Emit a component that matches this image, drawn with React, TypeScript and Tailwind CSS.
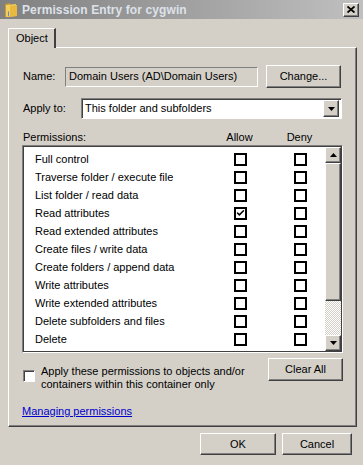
import { Check } from 'lucide-react';

const rows = [
  'Full control',
  'Traverse folder / execute file',
  'List folder / read data',
  'Read attributes',
  'Read extended attributes',
  'Create files / write data',
  'Create folders / append data',
  'Write attributes',
  'Write extended attributes',
  'Delete subfolders and files',
  'Delete',
  'Read permissions',
];

// classic raised 3D button
const raised =
  'bg-[#d4d0c8] border border-t-white border-l-white border-r-[#404040] border-b-[#404040] shadow-[inset_-1px_-1px_0_#808080]';

function Box({ checked }: { checked?: boolean }) {
  return (
    <div className="w-[13px] h-[13px] border-2 border-black bg-white flex items-center justify-center">
      {checked && <Check className="w-[10px] h-[10px] text-black" strokeWidth={4} />}
    </div>
  );
}

function Arrow({ up }: { up?: boolean }) {
  return (
    <svg width="7" height="4" viewBox="0 0 7 4">
      {up ? <path d="M3.5 0 L7 4 L0 4 Z" fill="#000" /> : <path d="M0 0 L7 0 L3.5 4 Z" fill="#000" />}
    </svg>
  );
}

export default function App() {
  return (
    <div className="w-[363px] h-[465px] bg-[#d4d0c8] overflow-hidden flex flex-col text-[11px] text-black font-['Tahoma','Liberation_Sans',sans-serif]">
      {/* Title bar */}
      <div className="h-[19px] flex items-center bg-linear-to-r from-[#808080] to-[#c0c0c0] px-[4px]">
        <svg width="14" height="16" viewBox="0 0 14 16">
          <path d="M1 2 L6 1 L6 15 L1 15 Z" fill="#c89a2a" />
          <path d="M2 3 L12 2 L12 14 L2 15 Z" fill="#f3cd5e" />
          <path d="M6 4 L13 3 L13 14 L6 15 Z" fill="#e8b93c" />
          <path d="M4 10 L5 9 L5 14 L4 14 Z" fill="#5a8ad0" />
        </svg>
        <span className="ml-[4px] font-bold text-[12px] text-[#dde2ea] tracking-[0.1px]">Permission Entry for cygwin</span>
        <div className={`ml-auto w-[16px] h-[14px] flex items-center justify-center ${raised}`}>
          <svg width="8" height="7" viewBox="0 0 8 7">
            <path d="M0.5 0.5 L7.5 6.5 M7.5 0.5 L0.5 6.5" stroke="#000" strokeWidth="1.8" />
          </svg>
        </div>
      </div>

      {/* Tab */}
      <div className="mt-[9px] ml-[8px] flex">
        <div className="w-[48px] h-[20px] border-t border-l border-t-white border-l-white border-r-2 border-r-[#404040] flex items-center pl-[7px] -mb-px bg-[#d4d0c8] relative z-10">
          Object
        </div>
      </div>

      {/* Panel */}
      <div className="ml-[8px] w-[349px] h-[380px] border border-t-white border-l-white border-r-[#404040] border-b-[#404040] shadow-[inset_-1px_-1px_0_#808080] flex flex-col pl-[14px] pr-[13px]">
        {/* Name */}
        <div className="mt-[17px] h-[23px] flex items-center">
          <span className="w-[42px]">Name:</span>
          <div className="w-[193px] h-[20px] border border-t-[#808080] border-l-[#808080] border-r-white border-b-white flex items-center pl-[3px]">
            Domain Users (AD\Domain Users)
          </div>
          <div className={`ml-[8px] w-[75px] h-[23px] flex items-center justify-center ${raised}`}>Change...</div>
        </div>

        {/* Apply to */}
        <div className="mt-[10px] h-[21px] flex items-center">
          <span className="w-[58px]">Apply to:</span>
          <div className="w-[261px] h-[21px] border border-t-[#808080] border-l-[#808080] border-r-white border-b-white shadow-[inset_1px_1px_0_#404040] bg-white flex items-center pl-[3px] pr-[2px]">
            <span className="flex-1">This folder and subfolders</span>
            <div className={`w-[16px] h-[17px] flex items-center justify-center ${raised}`}>
              <Arrow />
            </div>
          </div>
        </div>

        {/* Header */}
        <div className="mt-[11px] h-[15px] flex items-center -mr-[1px]">
          <span className="w-[198px]">Permissions:</span>
          <span className="w-[37px] text-center">Allow</span>
          <span className="ml-[23px] w-[37px] text-center">Deny</span>
        </div>

        {/* Listbox */}
        <div className="-ml-[1px] w-[321px] h-[208px] border border-t-[#808080] border-l-[#808080] border-r-white border-b-white shadow-[inset_1px_1px_0_#404040,inset_-1px_-1px_0_#404040] bg-white flex overflow-hidden p-[1px]">
          <div className="flex-1 flex flex-col pt-[3px] overflow-hidden">
            {rows.map((r, i) => (
              <div key={r} className="h-[18px] shrink-0 flex items-center">
                <span className="w-[210px] pl-[11px]">{r}</span>
                <Box checked={i === 3} />
                <div className="ml-[47px]">
                  <Box />
                </div>
              </div>
            ))}
          </div>
          {/* Scrollbar */}
          <div className="w-[16px] flex flex-col">
            <div className={`h-[16px] flex items-center justify-center ${raised}`}>
              <Arrow up />
            </div>
            <div className={`h-[138px] ${raised}`} />
            <div className="flex-1 bg-[repeating-conic-gradient(#d4d0c8_0_25%,#ffffff_0_50%)] bg-size-[2px_2px]" />
            <div className={`h-[16px] flex items-center justify-center ${raised}`}>
              <Arrow />
            </div>
          </div>
        </div>

        {/* Apply checkbox + Clear All */}
        <div className="mt-[5px] flex items-start">
          <div className="mt-[12px] w-[12px] h-[12px] border border-t-[#808080] border-l-[#808080] border-r-white border-b-white shadow-[inset_1px_1px_0_#404040] bg-white" />
          <div className="ml-[6px] mt-[7px] w-[215px] leading-[13px]">
            Apply these permissions to objects and/or
            <br />
            containers within this container only
          </div>
          <div className={`ml-auto w-[75px] h-[23px] flex items-center justify-center ${raised}`}>Clear All</div>
        </div>

        <div className="mt-auto mb-[7px] -ml-[1px]">
          <span className="text-[#0000cc] underline">Managing permissions</span>
        </div>
      </div>

      {/* Bottom buttons */}
      <div className="mt-[6px] flex justify-end pr-[11px] gap-[6px]">
        <div className={`w-[76px] h-[22px] flex items-center justify-center ${raised}`}>OK</div>
        <div className={`w-[70px] h-[22px] flex items-center justify-center ${raised}`}>Cancel</div>
      </div>
    </div>
  );
}
